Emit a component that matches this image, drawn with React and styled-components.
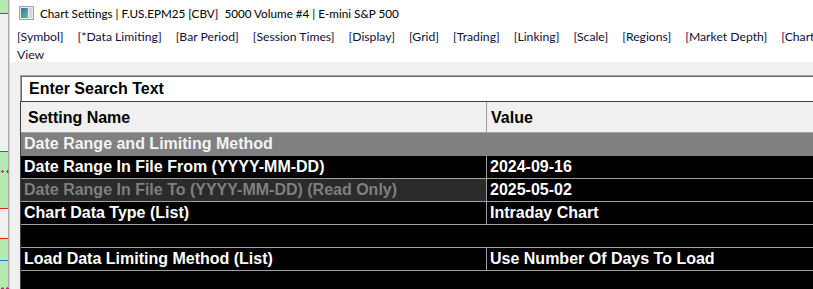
import React from 'react';
import styled, { createGlobalStyle } from 'styled-components';

const tabs = [
  'Symbol',
  '*Data Limiting',
  'Bar Period',
  'Session Times',
  'Display',
  'Grid',
  'Trading',
  'Linking',
  'Scale',
  'Regions',
  'Market Depth',
];

const settings = [
  { name: 'Date Range In File From (YYYY-MM-DD)', value: '2024-09-16' },
  { name: 'Date Range In File To (YYYY-MM-DD) (Read Only)', value: '2025-05-02', readOnly: true },
  { name: 'Chart Data Type (List)', value: 'Intraday Chart' },
  { blank: true },
  { name: 'Load Data Limiting Method (List)', value: 'Use Number Of Days To Load' },
  { blank: true },
];

// chart content peeking out from behind the dialog
const edgeBands = [
  { h: 13, bg: '#b4eab0' },
  { h: 137, bg: '#f0f0f0', line: '#e0261f' },
  { h: 56, bg: '#b4eab0', line: '#e0261f', tickAt: 18 },
  { h: 29, bg: '#f0f0f0', line: '#e0261f' },
  { h: 54, bg: '#b4eab0', line: '#e0261f', blueAt: 21, tickAt: 48 },
];

function TickMarks({ top }) {
  return (
    <Ticks style={ { top } } width="9" height="3" viewBox="0 0 9 3">
      <path d="M1 1.5h3M2.5 0v3M6 1.5h3M7.5 0v3" stroke="#d0207a" strokeWidth="1" />
    </Ticks>
  );
}

function App() {
  return (
    <>
      <GlobalStyle />
      <Screen>
        <ChartEdge>
          {edgeBands.map((band, i) => (
            <EdgeBand key={ i } $h={ band.h } $bg={ band.bg } $line={ band.line }>
              {band.blueAt && <BlueLine style={ { top: band.blueAt } } />}
              {band.tickAt && <TickMarks top={ band.tickAt } />}
            </EdgeBand>
          ))}
        </ChartEdge>
        <Window>
          <TitleBar>
            <AppIcon width="15" height="14" viewBox="0 0 15 14">
              <defs>
                <linearGradient id="ig" x1="0" y1="0" x2="1" y2="1">
                  <stop offset="0" stopColor="#2f6fb4" />
                  <stop offset="1" stopColor="#6cc08a" />
                </linearGradient>
              </defs>
              <rect x="0.5" y="0.5" width="14" height="13" fill="#e8eef2" stroke="#9aa4ac" />
              <rect x="2" y="2" width="7" height="10" fill="url(#ig)" />
              <rect x="10" y="2" width="3" height="10" fill="#cfd8de" />
            </AppIcon>
            <Title>Chart Settings | F.US.EPM25 [CBV]&nbsp; 5000 Volume #4 | E-mini S&amp;P 500</Title>
          </TitleBar>
          <TabBar>
            <TabLine>
              {tabs.map((t) => (
                <Tab key={ t }>[{t}]</Tab>
              ))}
              <Tab>[Chart</Tab>
            </TabLine>
            <TabLine>
              <Tab>View</Tab>
            </TabLine>
          </TabBar>
          <Panel>
            <SearchBox>Enter Search Text</SearchBox>
            <Grid>
              <HeaderRow>
                <HeaderCell>Setting Name</HeaderCell>
                <HeaderCell $value>Value</HeaderCell>
              </HeaderRow>
              <SectionRow>Date Range and Limiting Method</SectionRow>
              {settings.map((s, i) => (s.blank ? (
                <Row key={ i } />
              ) : (
                <Row key={ i }>
                  <NameCell $readOnly={ s.readOnly }>{s.name}</NameCell>
                  <ValueCell>{s.value}</ValueCell>
                </Row>
              )))}
            </Grid>
          </Panel>
        </Window>
      </Screen>
    </>
  );
}

export default App;

const GlobalStyle = createGlobalStyle`
  html, body {
    margin: 0;
    padding: 0;
    background: #f0f0f0;
  }
`;

const Screen = styled.div`
  width: 813px;
  height: 289px;
  display: flex;
  overflow: hidden;
`;

const ChartEdge = styled.div`
  width: 8px;
  flex: none;
  display: flex;
  flex-direction: column;
  border-right: 1px solid #a8a8a8;
  box-shadow: 1px 0 0 #d8d8d8;
`;

const EdgeBand = styled.div`
  position: relative;
  height: ${(p) => p.$h}px;
  background: ${(p) => p.$bg};
  border-top: ${(p) => (p.$line ? `1px solid ${p.$line}` : 'none')};
  flex: none;
`;

const BlueLine = styled.div`
  position: absolute;
  left: 0;
  right: 0;
  height: 1px;
  background: #2f6fd6;
`;

const Ticks = styled.svg`
  position: absolute;
  left: 0;
  display: block;
`;

const Window = styled.div`
  flex: 1;
  min-width: 0;
  margin-left: 1px;
  display: flex;
  flex-direction: column;
  background: #ffffff;
`;

const TitleBar = styled.div`
  height: 27px;
  display: flex;
  align-items: center;
  padding-left: 9px;
  padding-bottom: 1px;
  box-sizing: border-box;
`;

const AppIcon = styled.svg`
  flex: none;
  margin-right: 6px;
`;

const Title = styled.div`
  font: 11.7px Lato, "Noto Sans", sans-serif;
  color: #000000;
  white-space: nowrap;
`;

const TabBar = styled.div`
  padding: 0 0 0 7px;
  height: 35px;
`;

const TabLine = styled.div`
  display: flex;
  gap: 14px;
  height: 19px;
  align-items: center;
  white-space: nowrap;
  overflow: hidden;
  &:first-child {
    height: 18px;
  }
`;

const Tab = styled.span`
  font: 12.2px Lato, "Noto Sans", sans-serif;
  color: #10103a;
  flex: none;
`;

const Panel = styled.div`
  flex: 1;
  background: #f0f0f0;
  padding: 13px 0 0 10px;
  overflow: hidden;
`;

const SearchBox = styled.div`
  width: 900px;
  height: 26px;
  box-sizing: border-box;
  background: #ffffff;
  border-top: 1px solid #a0a0a0;
  border-left: 1px solid #a0a0a0;
  box-shadow: inset 1px 1px 0 #696969;
  padding: 2px 0 0 8px;
  font: bold 16px/21px "Liberation Sans", Arial, sans-serif;
  color: #000000;
`;

const Grid = styled.div`
  width: 900px;
  border-top: 1px solid #404040;
  border-left: 1px solid #404040;
  background: #000000;
  font: bold 16px/22px "Liberation Sans", Arial, sans-serif;
`;

const HeaderRow = styled.div`
  display: flex;
  height: 31px;
  background: #f0f0f0;
  border-bottom: 1px solid #a0a0a0;
  box-sizing: border-box;
`;

const HeaderCell = styled.div`
  width: ${(p) => (p.$value ? 'auto' : '465px')};
  flex: ${(p) => (p.$value ? '1' : 'none')};
  box-sizing: border-box;
  padding-left: ${(p) => (p.$value ? '4px' : '7px')};
  border-left: ${(p) => (p.$value ? '1px solid #a0a0a0' : 'none')};
  color: #000000;
  line-height: 32px;
`;

const SectionRow = styled.div`
  height: 23px;
  background: #808080;
  color: #f4f4f4;
  padding-left: 3px;
  line-height: 22px;
  box-sizing: border-box;
`;

const Row = styled.div`
  display: flex;
  height: 23px;
  box-sizing: border-box;
  border-bottom: 1px solid #a0a0a0;
  background: #000000;
`;

const NameCell = styled.div`
  width: 465px;
  flex: none;
  padding-left: 3px;
  box-sizing: border-box;
  background: ${(p) => (p.$readOnly ? '#2b2b2b' : '#000000')};
  color: ${(p) => (p.$readOnly ? '#7f7f7f' : '#ffffff')};
  white-space: nowrap;
`;

const ValueCell = styled.div`
  flex: 1;
  padding-left: 3px;
  border-left: 1px solid #a0a0a0;
  color: #ffffff;
  white-space: nowrap;
`;
